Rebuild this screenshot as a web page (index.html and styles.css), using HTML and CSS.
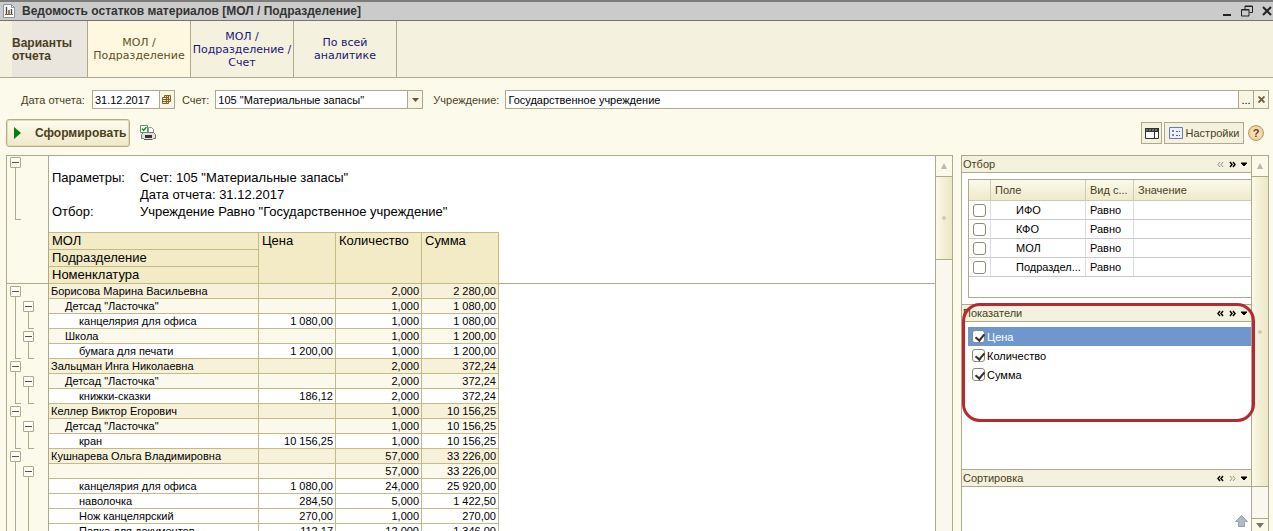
FILE: index.html
```html
<!DOCTYPE html>
<html lang="ru">
<head>
    <meta charset="UTF-8">
    <meta name="viewport" content="width=device-width, initial-scale=1.0">
    <title>Ведомость остатков материалов</title>
    <link rel="stylesheet" href="styles.css">
</head>
<body>
    <header class="titlebar">
        <svg class="title-icon" width="12" height="14" viewBox="0 0 12 14">
            <path d="M.5 .5h8l3 3v10H.5z" fill="#fff" stroke="#8296a8"/>
            <path d="M8.500 .5v3h3" fill="none" stroke="#8296a8"/>
            <path d="M3.500 3v7M6 6v4M8.500 5v5" stroke="#5a4a30" stroke-width="1.400"/>
            <path d="M2 10.500h8" stroke="#8a6a3a"/>
        </svg>
        <h1>Ведомость остатков материалов [МОЛ / Подразделение]</h1>
        <div class="window-buttons">
            <button type="button" aria-label="Свернуть">
                <svg width="12" height="12" viewBox="0 0 12 12"><path d="M2 10h8" stroke="#222" stroke-width="2"/></svg>
            </button>
            <button type="button" aria-label="Восстановить">
                <svg width="12" height="12" viewBox="0 0 12 12" fill="none" stroke="#222">
                    <path d="M4 4V1h7.500v6.500H8.500"/><path d="M4 1.500h7.500"/>
                    <path d="M.5 4.500h7.500v6.500H.5z"/><path d="M.5 5h7.500"/>
                </svg>
            </button>
            <button type="button" aria-label="Закрыть">
                <svg width="12" height="12" viewBox="0 0 12 12"><path d="M2 2l8 8M10 2l-8 8" stroke="#222" stroke-width="2"/></svg>
            </button>
        </div>
    </header>

    <nav class="variants">
        <div class="variants-title">Варианты отчета</div>
        <a href="#" class="variant active">МОЛ / Подразделение</a>
        <a href="#" class="variant">МОЛ / Подразделение / Счет</a>
        <a href="#" class="variant">По всей аналитике</a>
    </nav>

    <form class="params">
        <label for="date">Дата отчета:</label>
        <div class="field field-date">
            <input type="text" id="date" value="31.12.2017">
            <button type="button" aria-label="Календарь">
                <svg width="9" height="9" viewBox="0 0 9 9" fill="#f3e3b0" stroke="#7a6228">
                    <path d="M2.500 .5h6v6h-6z"/><path d="M.5 2.500h6v6h-6z"/><path d="M.5 4.500h8M.5 6.500h6M4.500 .5v8M6.500 .5v6" fill="none"/>
                </svg>
            </button>
        </div>
        <label for="account">Счет:</label>
        <div class="field field-account">
            <select id="account">
                <option>105 "Материальные запасы"</option>
            </select>
            <span class="drop"><svg width="7" height="4" viewBox="0 0 7 4"><path d="M0 0h7L3.500 4z" fill="#5f5530"/></svg></span>
        </div>
        <label for="org">Учреждение:</label>
        <div class="field field-org">
            <input type="text" id="org" value="Государственное учреждение">
            <button type="button" aria-label="Выбрать">...</button>
            <button type="button" aria-label="Очистить">
                <svg width="7" height="7" viewBox="0 0 7 7"><path d="M.5 .5l6 6M6.500 .5l-6 6" stroke="#6b6038" stroke-width="1.800"/></svg>
            </button>
        </div>
    </form>

    <div class="toolbar">
        <button type="button" class="run">
            <svg width="7" height="12" viewBox="0 0 7 12"><path d="M0 0l7 6-7 6z" fill="#0a7a12"/></svg>
            Сформировать
        </button>
        <button type="button" class="print" aria-label="Печать">
            <svg width="17" height="16" viewBox="0 0 17 16">
                <path d="M8.500 2.500h3l2 2v4h-5z" fill="#fff" stroke="#8c9a8c"/>
                <path d="M1.500 9.500l2-2h10l2 2v4h-2l-1 1h-8l-1-1h-2z" fill="#e2e2dc" stroke="#777"/>
                <path d="M5 10h7v3H5z" fill="#333"/>
                <path d="M4 14.500h8" stroke="#555"/>
                <path d="M.5 .5h7v7h-7z" fill="#fff" stroke="#6f8a78"/>
                <path d="M2 3.500l1.500 2L6.500 2" fill="none" stroke="#139013" stroke-width="1.400"/>
            </svg>
        </button>
        <div class="toolbar-right">
            <button type="button" class="tool" aria-label="Панель">
                <svg width="14" height="11" viewBox="0 0 14 11">
                    <path d="M.5 .5h13v10H.5z" fill="#fff" stroke="#333"/>
                    <path d="M0 0h14v4H0z" fill="#333"/>
                    <path d="M1 2h12" stroke="#aaa" stroke-dasharray="2 1"/>
                    <path d="M9.500 4v7" stroke="#333"/>
                </svg>
            </button>
            <button type="button" class="tool settings">
                <svg width="14" height="12" viewBox="0 0 14 12">
                    <path d="M.5 .5h13v11H.5z" fill="#eef1fb" stroke="#6c7cae"/>
                    <path d="M3.500 3.500h1v1h-1zM3.500 7.500h1v1h-1z" fill="#fff" stroke="#4d5f9d"/>
                    <path d="M7 4.500h4M7 8.500h4" stroke="#4d5f9d" stroke-dasharray="2 1"/>
                </svg>
                Настройки
            </button>
            <button type="button" class="help" aria-label="Справка">?</button>
        </div>
    </div>

    <main class="main">
        <section class="report">
            <div class="sheet">
                <table>
                    <colgroup>
                        <col class="c-tree1"><col class="c-tree2"><col class="c-name"><col class="c-price"><col class="c-qty"><col class="c-sum"><col>
                    </colgroup>
                    <thead>
                        <tr>
                            <td class="tree tree-head" rowspan="4" colspan="2"><button type="button" class="toggle" aria-label="Свернуть"></button></td>
                            <td class="about" colspan="5">
                                <dl>
                                    <dt>Параметры:</dt>
                                    <dd>Счет: 105 "Материальные запасы"</dd>
                                    <dd>Дата отчета: 31.12.2017</dd>
                                    <dt>Отбор:</dt>
                                    <dd>Учреждение Равно "Государственное учреждение"</dd>
                                </dl>
                            </td>
                        </tr>
                        <tr class="first"><th>МОЛ</th><th rowspan="3">Цена</th><th rowspan="3">Количество</th><th rowspan="3">Сумма</th><td class="rest" rowspan="3"></td></tr>
                        <tr><th>Подразделение</th></tr>
                        <tr><th>Номенклатура</th></tr>
                    </thead>
                    <tbody id="rows"></tbody>
                </table>
            </div>
            <div class="scroll">
                <button type="button" class="scroll-up" aria-label="Вверх"></button>
                <div class="thumb thumb-report"></div>
            </div>
        </section>

        <aside class="side">
            <div class="panels">
                <section class="panel panel-filter">
                    <header>
                        <h2>Отбор</h2>
                        <svg class="arrows" width="31" height="7" viewBox="0 0 31 7"><use href="#left" class="off"/><use href="#right" x="12"/><use href="#down" x="23"/></svg>
                    </header>
                    <div class="filter-box">
                        <table class="filter">
                            <colgroup><col class="f-check"><col class="f-field"><col class="f-kind"><col></colgroup>
                            <thead>
                                <tr><th></th><th>Поле</th><th>Вид с...</th><th>Значение</th></tr>
                            </thead>
                            <tbody>
                                <tr><td><input type="checkbox" id="f1"></td><td><label for="f1">ИФО</label></td><td>Равно</td><td></td></tr>
                                <tr><td><input type="checkbox" id="f2"></td><td><label for="f2">КФО</label></td><td>Равно</td><td></td></tr>
                                <tr><td><input type="checkbox" id="f3"></td><td><label for="f3">МОЛ</label></td><td>Равно</td><td></td></tr>
                                <tr><td><input type="checkbox" id="f4"></td><td><label for="f4">Подраздел...</label></td><td>Равно</td><td></td></tr>
                            </tbody>
                        </table>
                    </div>
                </section>
                <section class="panel panel-values">
                    <header>
                        <h2>Показатели</h2>
                        <svg class="arrows" width="31" height="7" viewBox="0 0 31 7"><use href="#left"/><use href="#right" x="12"/><use href="#down" x="23"/></svg>
                    </header>
                    <ul class="values">
                        <li class="selected"><input type="checkbox" id="v1" checked><label for="v1">Цена</label></li>
                        <li><input type="checkbox" id="v2" checked><label for="v2">Количество</label></li>
                        <li><input type="checkbox" id="v3" checked><label for="v3">Сумма</label></li>
                    </ul>
                    <div class="highlight"></div>
                </section>
                <section class="panel panel-sort">
                    <header>
                        <h2>Сортировка</h2>
                        <svg class="arrows" width="31" height="7" viewBox="0 0 31 7"><use href="#left"/><use href="#right" x="12" class="off"/><use href="#down" x="23"/></svg>
                    </header>
                    <button type="button" class="move-up" aria-label="Переместить вверх">
                        <svg width="13" height="12" viewBox="0 0 13 12"><path d="M6.500 .5l6 6h-3v5h-6v-5h-3z" fill="#b3b9c8" stroke="#9aa0b0"/></svg>
                    </button>
                </section>
            </div>
            <div class="scroll">
                <button type="button" class="scroll-up" aria-label="Вверх"></button>
                <div class="thumb thumb-side"></div>
                <button type="button" class="scroll-down" aria-label="Вниз"></button>
            </div>
        </aside>
    </main>

    <svg width="0" height="0" class="defs">
        <defs>
            <path id="left" d="M3 1l-2 2.500 2 2.500M6 1l-2 2.500 2 2.500"/>
            <path id="right" d="M1 1l2 2.500-2 2.500M4 1l2 2.500-2 2.500"/>
            <path id="down" d="M1 2h6L4 5z"/>
        </defs>
    </svg>

    <script>
        // level, name, price, quantity, sum, closes: how many groups end on this row
        const rows = [
            [0, 'Борисова Марина Васильевна', '', '2,000', '2 280,00', 0],
            [1, 'Детсад "Ласточка"', '', '1,000', '1 080,00', 0],
            [2, 'канцелярия для офиса', '1 080,00', '1,000', '1 080,00', 1],
            [1, 'Школа', '', '1,000', '1 200,00', 0],
            [2, 'бумага для печати', '1 200,00', '1,000', '1 200,00', 2],
            [0, 'Зальцман Инга Николаевна', '', '2,000', '372,24', 0],
            [1, 'Детсад "Ласточка"', '', '2,000', '372,24', 0],
            [2, 'книжки-сказки', '186,12', '2,000', '372,24', 2],
            [0, 'Келлер Виктор Егорович', '', '1,000', '10 156,25', 0],
            [1, 'Детсад "Ласточка"', '', '1,000', '10 156,25', 0],
            [2, 'кран', '10 156,25', '1,000', '10 156,25', 2],
            [0, 'Кушнарева Ольга Владимировна', '', '57,000', '33 226,00', 0],
            [1, '', '', '57,000', '33 226,00', 0],
            [2, 'канцелярия для офиса', '1 080,00', '24,000', '25 920,00', 0],
            [2, 'наволочка', '284,50', '5,000', '1 422,50', 0],
            [2, 'Нож канцелярский', '270,00', '1,000', '270,00', 0],
            [2, 'Папка для документов', '112,17', '12,000', '1 346,00', 0]
        ];
        const toggle = '<button type="button" class="toggle" aria-label="Свернуть"></button>';

        function treeCell(column, level, closes) {
            if (level < column) return '<td class="tree"></td>';
            if (level === column) return '<td class="tree node">' + toggle + '</td>';
            const end = closes >= 2 - column ? ' end' : '';
            return '<td class="tree line' + end + '"></td>';
        }

        document.getElementById('rows').innerHTML = rows.map(function (r) {
            return '<tr class="level' + r[0] + '">' +
                treeCell(0, r[0], r[5]) + treeCell(1, r[0], r[5]) +
                '<td class="name">' + r[1] + '</td>' +
                '<td class="num">' + r[2] + '</td><td class="num">' + r[3] + '</td><td class="num">' + r[4] + '</td>' +
                '<td></td></tr>';
        }).join('');
    </script>
</body>
</html>
```
FILE: styles.css
```css
* {
    box-sizing: border-box;
}
body {
    margin: 0;
    height: 100vh;
    display: flex;
    flex-direction: column;
    overflow: hidden;
    background: #fcfaeb;
    color: #4a3f1c;
    font-family: "Liberation Sans", Arial, sans-serif;
    font-size: 11px;
}
button, input, select {
    font: inherit;
    color: inherit;
    margin: 0;
    padding: 0;
    border: none;
    background: none;
    border-radius: 0;
    appearance: none;
}
svg {
    display: block;
    flex: none;
}
.defs {
    position: absolute;
}

/* title bar */
.titlebar {
    display: flex;
    align-items: center;
    height: 21px;
    flex: none;
    padding: 0 0 0 3px;
    gap: 7px;
    background: #cbcbcb;
    border-top: 2px solid #7b7b77;
    border-bottom: 1px solid #74746a;
}
.titlebar h1 {
    margin: 0;
    font-size: 12px;
    color: #333;
}
.window-buttons {
    margin-left: auto;
    display: flex;
    gap: 8px;
}

/* report variants */
.variants {
    display: flex;
    flex: none;
    height: 57px;
    padding-left: 12px;
    background: #f4f2df;
    border-bottom: 1px solid #aca98c;
    line-height: 13px;
}
.variants-title, .variant {
    display: flex;
    align-items: center;
    border-right: 1px solid #aca98c;
}
.variants-title {
    width: 76px;
    padding-top: 2px;
    background: #ebe6dd;
    font-size: 12px;
    font-weight: bold;
}
.variant {
    width: 103px;
    justify-content: center;
    text-align: center;
    text-decoration: none;
    color: #1a1478;
    font-family: "DejaVu Sans", Verdana, sans-serif;
}
.variant.active {
    background: #fff8e0;
    color: #5c5024;
}

/* parameters */
.params {
    display: flex;
    flex: none;
    align-items: center;
    padding: 12px 4px 10px 21px;
}
.field {
    display: flex;
    height: 19px;
    background: #fff;
    border: 1px solid #aca98c;
    color: #000;
}
.field input, .field select {
    flex: 1;
    min-width: 0;
    padding-left: 2px;
}
.field button, .drop {
    display: flex;
    align-items: center;
    justify-content: center;
    width: 15px;
    background: #f8f5e4;
    border-left: 1px solid #aca98c;
}
.field-date {
    width: 83px;
    margin: 0 7px;
}
.field-account {
    width: 208px;
    margin: 0 10px 0 6px;
}
.field-org {
    flex: 1;
    margin-left: 6px;
}

/* toolbar */
.toolbar {
    display: flex;
    flex: none;
    align-items: center;
    padding: 0 9px 8px 6px;
}
.run {
    display: flex;
    align-items: center;
    gap: 14px;
    width: 124px;
    height: 28px;
    padding-left: 7px;
    border: 1px solid #b5ad85;
    border-radius: 3px;
    background: linear-gradient(#fdfbf0, #efe9c8);
    box-shadow: inset 0 0 0 1px #e3dcb6;
    font-size: 12px;
    font-weight: bold;
}
.print {
    margin-left: 10px;
}
.toolbar-right {
    display: flex;
    align-items: center;
    gap: 2px;
    margin-left: auto;
}
.tool {
    display: flex;
    align-items: center;
    justify-content: center;
    gap: 3px;
    width: 21px;
    height: 22px;
    border: 1px solid #aca98c;
    background: #f4f1de;
}
.settings {
    width: 80px;
}
.help {
    width: 16px;
    height: 16px;
    margin-left: 2px;
    border: 1px solid #b29a70;
    border-radius: 50%;
    background: radial-gradient(#fff0d0, #f0c078);
    color: #6a3b10;
    font-weight: bold;
}

/* main area */
.main {
    display: flex;
    flex: 1;
    min-height: 0;
    gap: 8px;
    padding: 0 4px 0 6px;
}
.report {
    display: flex;
    flex: 1;
    min-width: 0;
    border: 1px solid #aca98c;
    border-bottom: none;
}
.sheet {
    flex: 1;
    min-width: 0;
    overflow: hidden;
    background: #fff;
    color: #000;
}
table {
    width: 100%;
    table-layout: fixed;
    border-collapse: separate;
    border-spacing: 0;
}
td, th {
    padding: 0;
    font-weight: normal;
    text-align: left;
}
.c-tree1 { width: 14px; }
.c-tree2 { width: 28px; }
.c-name { width: 210px; }
.c-price { width: 77px; }
.c-qty { width: 86px; }
.c-sum { width: 77px; }

.about {
    height: 76px;
    vertical-align: top;
}
.about dl {
    display: grid;
    grid-template-columns: 88px 1fr;
    margin: 0;
    padding: 13px 0 0 3px;
    font-size: 13px;
    line-height: 17px;
}
.about dd {
    grid-column: 2;
    margin: 0;
}
.sheet th {
    height: 17px;
    padding-left: 3px;
    vertical-align: top;
    font-size: 13px;
    line-height: 16px;
    background: #f2ebc6;
    border-right: 1px solid #c3ba85;
    border-bottom: 1px solid #c3ba85;
}
.sheet .first th {
    border-top: 1px solid #c3ba85;
}
.sheet .rest {
    border-bottom: 1px solid #aca98c;
}
.sheet tbody td {
    height: 15px;
    line-height: 14px;
    white-space: nowrap;
}
.sheet .name, .sheet .num {
    border-right: 1px solid #c3ba85;
    border-bottom: 1px solid #c3ba85;
}
.sheet .num {
    text-align: right;
    padding-right: 2px;
}
.name { padding-left: 2px; }
.level1 .name { padding-left: 16px; }
.level2 .name { padding-left: 30px; }
.level0 .name, .level0 .num { background: #f7f1da; }
.level1 .name, .level1 .num { background: #fbf9ec; }

/* outline of the groups */
.tree {
    position: relative;
    background: #fcfaeb;
}
.tree-head {
    vertical-align: top;
    padding: 1px 0 0 3px;
    border-right: 1px solid #aca98c;
    border-bottom: 1px solid #aca98c;
}
.tree + .tree {
    border-right: 1px solid #aca98c;
}
.toggle {
    position: relative;
    display: block;
    width: 11px;
    height: 11px;
    border: 1px solid #aca98c;
    border-radius: 1px;
    background: linear-gradient(#555, #555) center / 7px 1px no-repeat #fffef5;
}
.node .toggle {
    margin-left: 3px;
}
.tree + .node .toggle {
    margin-left: 2px;
}
.node::after, .line::after, .tree-head::after {
    content: "";
    position: absolute;
    left: 8px;
    top: 0;
    bottom: 0;
    width: 5px;
    border-left: 1px solid #aca98c;
}
.node::after {
    top: 13px;
}
.tree + .node::after, .tree + .line::after {
    left: 7px;
}
.end::after {
    border-bottom: 1px solid #aca98c;
}
.tree-head::after {
    top: 12px;
    bottom: 63px;
    border-bottom: 1px solid #aca98c;
}

/* scroll bars */
.scroll {
    display: flex;
    flex-direction: column;
    flex: none;
    width: 17px;
    background: #f9f7ee;
    border-left: 1px solid #aca98c;
}
.scroll-up, .scroll-down {
    flex: none;
    display: flex;
    justify-content: center;
    align-items: center;
    height: 21px;
    background: #fbf9ea;
    border-bottom: 1px solid #aca98c;
}
.scroll-up::before {
    content: "";
    border: 3px solid transparent;
    border-top: none;
    border-bottom: 6px solid #b9b7a8;
}
.scroll-down {
    height: 13px;
    margin-top: auto;
    border-top: 1px solid #aca98c;
    border-bottom: none;
}
.scroll-down::before {
    content: "";
    border: 4px solid transparent;
    border-bottom: none;
    border-top: 5px solid #77756a;
}
.thumb {
    display: flex;
    align-items: center;
    justify-content: center;
    background: linear-gradient(90deg, #fbf8e6, #ece7c4);
    border-bottom: 1px solid #aca98c;
}
.thumb::before {
    content: "";
    width: 4px;
    height: 4px;
    border-radius: 2px;
    background: #cfccb4;
}
.thumb-report {
    height: 83px;
}
.thumb-side {
    height: 310px;
}

/* settings panels */
.side {
    display: flex;
    width: 308px;
    flex: none;
    border: 1px solid #aca98c;
    border-bottom: none;
}
.panels {
    display: flex;
    flex-direction: column;
    flex: 1;
    min-width: 0;
    background: #fff;
}
.panel {
    position: relative;
    flex: none;
    border-bottom: 1px solid #aca98c;
}
.panel header {
    display: flex;
    align-items: center;
    justify-content: space-between;
    height: 17px;
    padding: 0 3px 0 1px;
    background: #f4f1de;
    border-bottom: 1px solid #aca98c;
}
.panel h2 {
    margin: 0;
    font-size: 11px;
    font-weight: normal;
}
.arrows {
    fill: none;
    stroke: #000;
    stroke-width: 1.5;
}
.arrows use[href="#down"] {
    fill: #000;
    stroke-width: 1;
}
.arrows .off {
    stroke: #8f8d80;
    stroke-width: 1;
}
.panel-filter {
    height: 149px;
}
.panel-values {
    height: 165px;
}
.panel-sort {
    flex: 1;
    display: flex;
    flex-direction: column;
    border-bottom: none;
}
.filter-box {
    height: 119px;
    margin: 6px 0 0 6px;
    border: 1px solid #aca98c;
    border-right: none;
}
.f-check { width: 22px; }
.f-field { width: 95px; }
.f-kind { width: 48px; }
.filter th {
    height: 21px;
    padding-left: 4px;
    background: linear-gradient(#fbf9ea, #efeacb);
    border-right: 1px solid #cfcbae;
    border-bottom: 1px solid #cfcbae;
}
.filter td {
    height: 19px;
    padding-left: 4px;
    color: #000;
    border-right: 1px solid #dcdce2;
    border-bottom: 1px solid #c9c9c9;
    white-space: nowrap;
}
.filter th:last-child, .filter td:last-child {
    border-right: none;
}
.filter td:nth-child(2) {
    padding-left: 25px;
}
input[type="checkbox"] {
    display: block;
    flex: none;
    width: 13px;
    height: 13px;
    border: 1px solid #8d8a76;
    border-radius: 3px;
    background: #fff;
}
input[type="checkbox"]:checked::before {
    content: "";
    display: block;
    width: 4px;
    height: 7px;
    margin: 1px 0 0 4px;
    border: solid #333;
    border-width: 0 2px 2px 0;
    transform: rotate(40deg);
}
.values {
    margin: 5px 0 0 6px;
    padding: 0;
    list-style: none;
    color: #000;
}
.values li {
    display: flex;
    align-items: center;
    gap: 2px;
    height: 19px;
    padding-left: 4px;
}
.values .selected {
    background: #7097cd;
    color: #fff;
}
.highlight {
    position: absolute;
    top: -2px;
    left: 0;
    right: -4px;
    height: 119px;
    border: 3px solid #b8292f;
    border-radius: 18px;
    pointer-events: none;
    z-index: 1;
}
.move-up {
    margin: auto 3px 4px auto;
}
```
